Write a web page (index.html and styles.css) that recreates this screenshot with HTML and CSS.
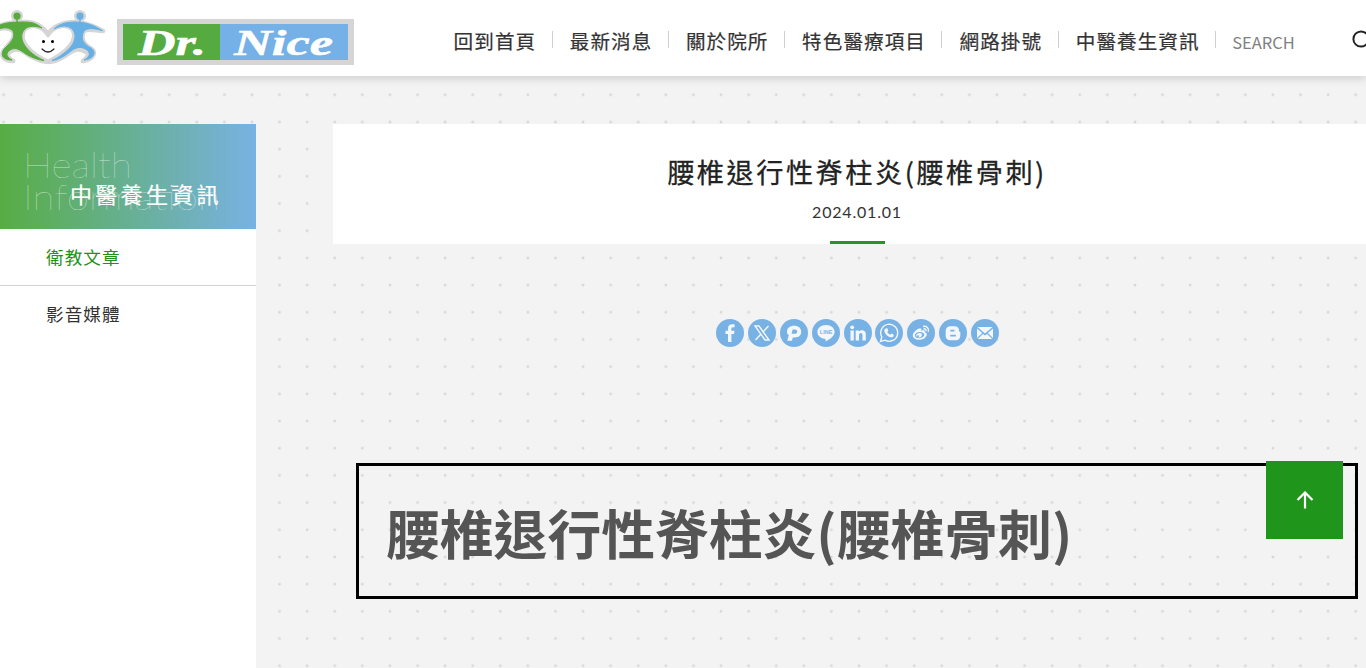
FILE: index.html
```html
<!DOCTYPE html>
<html lang="zh-Hant">
<head>
<meta charset="utf-8">
<title>腰椎退行性脊柱炎(腰椎骨刺)</title>
<link rel="stylesheet" href="styles.css">
</head>
<body>
<header class="header">
  <svg class="logo" viewBox="0 0 360 76" width="360" height="76">
    <g id="people" stroke-linejoin="round" stroke-linecap="round">
      <g fill="#d5d5d5" stroke="#d5d5d5" stroke-width="4.500">
        <path d="M-8 30C0 23 13 22 25 22C36 22 43 27 48 34C54 26 62 22 75 22C88 22 96 28 103 31C97 31 88 28 84 31C80 38 84 44 90 48C97 52 94 59 83 61C89 56 90 53 84 51C75 47 71 52 65 56C59 60 53 62 48 62C42 62 36 59 30 56C23 51 18 47 11 51C5 54 8 58 13 61C4 61 0 56 4 50C10 43 16 38 13 31C8 27 0 27 -8 33Z"/>
        <circle cx="17" cy="16" r="3.8"/><circle cx="80" cy="16" r="3.8"/>
      </g>
      <path fill="#fff" stroke="#d5d5d5" stroke-width="3" d="M48 36C42 26 31 24 25 30C19 40 29 52 48 61C66 52 78 40 72 30C66 24 54 26 48 36Z"/>
      <path fill="#57aa3d" stroke="#57aa3d" stroke-width="1" d="M-8 30C0 22 13 22 25 22C34 22 38 25 42 28C36 26 28 25 24 30C17 39 27 53 44 60.500C38 60 31 57 26 54C19 49 15 47 10 50C4 54 8 58 12 60C3 60 0 55 4 49C10 43 16 38 13 31C8 26 0 27 -8 33Z"/>
      <path fill="#66b0e6" stroke="#66b0e6" stroke-width="1" d="M102 30.500C97 27 88 22 75 22C64 22 58 25 54 29C61 25 69 25 73 30C80 40 68 53 52 60.500C59 60 66 55 71 51C76 47 82 46 87 50C92 54 88 58 84 60C94 59 97 52 91 48C83 44 80 38 84 31C88 27 96 29 102 30.500Z"/>
      <g fill="#57aa3d"><circle cx="17" cy="16" r="3.6"/><path d="M16.3 18h1.4v6h-1.4z"/></g>
      <g fill="#66b0e6"><circle cx="80" cy="16" r="3.6"/><path d="M79.3 18h1.4v6h-1.4z"/></g>
      <circle cx="43.5" cy="41.5" r="1.5"/><circle cx="52.5" cy="41.5" r="1.5"/>
      <path d="M42 49Q48 55 54 49" fill="none" stroke="#222" stroke-width="1.2"/>
    </g>
    <path fill="#d5d5d5" d="M117 19h237v46h-237z"/>
    <path fill="#55aa40" d="M123 24h97v36h-97z"/>
    <path fill="#75b0e6" d="M220 24h128v36h-128z"/>
    <g class="logo-text">
      <text x="138" y="55" textLength="68" lengthAdjust="spacingAndGlyphs">Dr.</text>
      <text x="234" y="55" textLength="99" lengthAdjust="spacingAndGlyphs">Nice</text>
    </g>
  </svg>
  <nav class="nav">
    <a>回到首頁</a><a>最新消息</a><a>關於院所</a><a>特色醫療項目</a><a>網路掛號</a><a>中醫養生資訊</a>
  </nav>
  <span class="search">SEARCH</span>
  <svg class="search-icon" viewBox="0 0 24 24" width="24" height="24"><circle cx="10" cy="10" r="7.6"/><path d="M15.5 15.5L21 21"/></svg>
</header>
<div class="page">
  <aside class="side">
    <div class="side-head">
      <div class="side-en">
        <svg width="230" height="70" viewBox="0 0 230 70"><text x="-1" y="29" textLength="109" lengthAdjust="spacingAndGlyphs">Health</text><text x="-1" y="61" textLength="197" lengthAdjust="spacingAndGlyphs">Information</text></svg>
      </div>
      <h2 class="side-title">中醫養生資訊</h2>
    </div>
    <a class="side-link active">衛教文章</a>
    <a class="side-link">影音媒體</a>
  </aside>
  <main class="main">
    <div class="title-box">
      <h1 class="title">腰椎退行性脊柱炎(腰椎骨刺)</h1>
      <div class="date">2024.01.01</div>
      <div class="bar"></div>
    </div>
    <div class="share">
      <svg viewBox="0 0 28 28"><circle cx="14" cy="14" r="14"/><path class="w" d="M12 23v-8H9.500v-3.200H12V9.600C12 6.600 13.600 5.200 16.200 5.200L18.600 5.300V8.300H17C15.700 8.300 15.400 9 15.400 10v1.800h3.100L18 15h-2.600v8z"/></svg>
      <svg viewBox="0 0 28 28"><circle cx="14" cy="14" r="14"/><path class="l" d="M7 7h4l10 14h-4zM20.500 7l-6 6.500M13 15l-5.500 6"/></svg>
      <svg viewBox="0 0 28 28"><circle cx="14" cy="14" r="14"/><path class="w" fill-rule="evenodd" d="M7 13.200C6.800 9.200 9.800 6.800 14.300 6.800C18.300 6.800 21.200 9 21.200 12.800C21.200 16.500 18.500 18.500 15 18.500H12.800L12 21.700H7.300L8.800 16C7.700 15.500 7 14.700 7 13.200ZM12.600 10.400L11.600 14.800H14.700C16.200 14.800 17.200 13.900 17.200 12.500C17.200 11.100 16.300 10.400 14.800 10.400Z"/></svg>
      <svg viewBox="0 0 28 28"><circle cx="14" cy="14" r="14"/><path class="w" d="M14 6C9 6 5.400 9 5.400 13C5.400 16.500 8.500 19.200 12.500 19.800C14 20.100 13.700 21 13.400 22.500C16.500 21 22.600 17.500 22.600 13C22.600 9 19 6 14 6Z"/><text class="line-t" x="7.800" y="15" textLength="12.500" lengthAdjust="spacingAndGlyphs">LINE</text></svg>
      <svg viewBox="0 0 28 28"><circle cx="14" cy="14" r="14"/><path class="w" d="M6.500 11.500h3.300V21.500H6.500zM11.700 11.500h3.100v1.300C16.500 10.500 21.800 10.600 21.800 15.200V21.500h-3.300v-5.500C18.500 13.300 15 13.300 15 16V21.500h-3.300z"/><circle class="w" cx="8.200" cy="8.300" r="1.900"/></svg>
      <svg viewBox="0 0 28 28"><circle cx="14" cy="14" r="14"/><path class="l" d="M5.500 22.500L6.800 18A8.500 8.500 0 1 1 10 21.200Z"/><path class="w" d="M11 9.200L12.500 9.500L13.300 11.700L12.300 13.100C13 14.400 13.900 15.200 15.200 15.700L16.500 14.600L18.800 15.700C19 17.500 17.500 18.500 16 18.300C12.500 17.700 9.800 14.900 9.300 12C9.200 10.700 10 9.700 11 9.200Z"/></svg>
      <svg viewBox="0 0 28 28"><circle cx="14" cy="14" r="14"/><path class="w" fill-rule="evenodd" d="M12.500 9.500C14 9 14.800 10 14.300 11.700C16.500 10.900 18.300 11.300 17.800 13.300C19.500 13.700 20.200 14.900 19.600 16.600C18.700 19.400 15.500 20.800 12 20.800C8.500 20.800 5.800 19 5.800 16.500C5.800 13.700 9.600 10 12.500 9.500ZM12 13C9.300 13.300 7.700 14.900 7.900 16.700C8.100 18.500 10.100 19.400 12.700 19.200C15.600 18.900 17.500 17.400 17.300 15.600C17.100 13.800 14.900 12.700 12 13Z"/><path class="w" fill-rule="evenodd" d="M11.500 14.200C14 13.500 15.500 15 14.800 16.700C14 18.700 11 19.200 9.700 17.800C8.500 16.500 9.500 14.700 11.500 14.200ZM11 16.300a1 1 0 1 0 .1 0z"/><path class="l" d="M16 7.500C19.500 6.500 22.300 9.300 21.300 12.800M16.500 9.900C18.300 9.500 19.500 10.800 19 12.300"/></svg>
      <svg viewBox="0 0 28 28"><circle cx="14" cy="14" r="14"/><path class="w" fill-rule="evenodd" d="M11.300 7.200h4.200c2.800 0 4.500 1.500 4.500 4c0 1.200.4 1.500 1.300 1.700v3.800c0 2.600-1.700 4.500-4.600 4.500h-5.400C8.400 21.200 6.700 19.500 6.700 16.700v-5C6.700 9 8.500 7.200 11.300 7.200zM11.300 10.800v1.600h4.200v-1.600zM11.300 15.800v1.700h5.600v-1.700z"/></svg>
      <svg viewBox="0 0 28 28"><circle cx="14" cy="14" r="14"/><path class="w" d="M6.500 8h15L14 14.500zM6 9.500L11.200 14L6 19zM22 9.500V19L16.800 14zM6.700 20L12 14.900L14 16.500L16 14.900L21.300 20z"/></svg>
    </div>
    <div class="article"><div class="article-title">腰椎退行性脊柱炎(腰椎骨刺)</div></div>
  </main>
</div>
<a class="top"><svg viewBox="0 0 18 18" width="18" height="18"><path d="M9 17.500V2M1.500 9L9 1.500L16.500 9"/></svg></a>
</body>
</html>
```
FILE: styles.css
```css
* { box-sizing: border-box; }
body {
  margin: 0;
  width: 1366px;
  height: 668px;
  overflow: hidden;
  font-family: "Noto Sans CJK TC", sans-serif;
  color: #333;
  background-color: #f3f3f3;
  background-image: radial-gradient(circle at center, #d6d6d6 0, #d9d9d9 1px, rgba(243,243,243,0) 1.8px);
  background-size: 27.6px 27.2px;
  background-position: -10.2px -.4px;
}
.header {
  position: relative;
  display: flex;
  align-items: center;
  height: 76px;
  background: #fff;
  box-shadow: 0 2px 9px rgba(0,0,0,.17);
}
.logo { flex: none; display: block; }
.logo-text text {
  font: italic bold 36px "Liberation Serif", serif;
  fill: #fff;
  stroke: #fff;
  stroke-width: .5;
}
.nav { display: flex; margin-left: 76.500px; padding-top: 6px; }
.nav a {
  position: relative;
  padding: 0 16.500px 0 17.100px;
  font-size: 19.600px;
  font-weight: 400;
  -webkit-text-stroke: .2px #333;
  letter-spacing: 1.050px;
  line-height: 28px;
  white-space: nowrap;
}
.nav a::after {
  content: "";
  position: absolute;
  right: 0;
  top: 4px;
  width: 1px;
  height: 17px;
  background: #d0d0d0;
}
.search { margin-left: 16px; padding-top: 7px; font-size: 16.500px; color: #808080; font-weight: 400; }
.search-icon { position: absolute; left: 1351px; top: 29px; fill: none; stroke: #222; stroke-width: 2; }
.page { display: flex; height: 592px; padding-top: 48px; }
.side { width: 256px; height: 560px; flex: none; background: #fff; }
.side-head {
  position: relative;
  height: 105px;
  background: linear-gradient(90deg, #57ad43, #78b2e3);
}
.side-en { position: absolute; left: 24px; top: 25px; }
.side-en svg { overflow: visible; }
.side-en text { font: 100 35px Lato, sans-serif; fill: rgba(255,255,255,.65); }
.side-title {
  position: absolute;
  left: 70px;
  top: 53px;
  margin: 0;
  font-size: 22px;
  line-height: 32px;
  font-weight: 400;
  -webkit-text-stroke: .2px #fff;
  letter-spacing: 3.300px;
  color: #fff;
  white-space: nowrap;
}
.side-link {
  display: block;
  height: 57px;
  padding-left: 46px;
  font-size: 17.600px;
  letter-spacing: 1.050px;
  line-height: 56px;
}
.side-link.active { color: #1f9119; border-bottom: 1px solid #d3d3d3; }
.main { width: 1048px; flex: none; margin-left: 77px; }
.title-box {
  display: flex;
  flex-direction: column;
  align-items: center;
  width: 1048px;
  height: 120px;
  background: #fff;
}
.title {
  margin: 27px 0 0;
  font-size: 27.200px;
  line-height: 40px;
  font-weight: 400;
  -webkit-text-stroke: .3px #222;
  letter-spacing: 2.500px;
  color: #222;
}
.date { margin-top: 8px; font: 16px/26px Lato, sans-serif; letter-spacing: .8px; }
.bar { width: 55px; height: 3px; margin-top: 16px; background: #2b922b; }
.share { display: flex; gap: 3.900px; margin: 75px 0 0 383px; height: 28px; }
.share svg { width: 28px; height: 28px; fill: #78b2e5; }
.share .w { fill: #f4f7fa; }
.share .l { fill: none; stroke: #f4f7fa; stroke-width: 1.400; }
.share .line-t { font: bold 5.500px "Liberation Sans", sans-serif; fill: #78b2e5; }
.article {
  width: 1002px;
  height: 136px;
  margin: 116px 0 0 23px;
  padding: 26px 27px;
  border: 3px solid #000;
}
.article-title { font-size: 53.800px; font-weight: 700; line-height: 80px; color: #555; white-space: nowrap; }
.top {
  position: absolute;
  left: 1266px;
  top: 461px;
  width: 77px;
  height: 78px;
  display: flex;
  align-items: center;
  justify-content: center;
  background: #1f961b;
}
.top svg { fill: none; stroke: #fff; stroke-width: 2.200; }
```
